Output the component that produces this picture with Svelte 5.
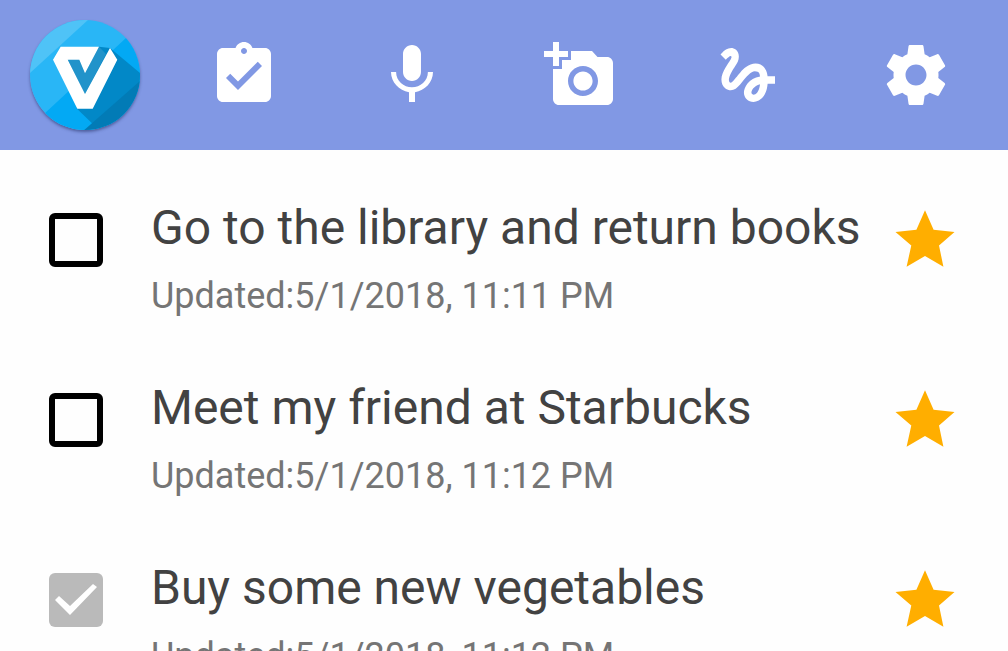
<script>
  const actions = [
    {
      label: 'New checklist',
      path: 'M19 3h-4.18C14.4 1.84 13.3 1 12 1c-1.3 0-2.4.84-2.82 2H5c-1.1 0-2 .9-2 2v14c0 1.1.9 2 2 2h14c1.1 0 2-.9 2-2V5c0-1.1-.9-2-2-2zm-7 0c.55 0 1 .45 1 1s-.45 1-1 1-1-.45-1-1 .45-1 1-1zm-2 14l-4-4 1.41-1.41L10 14.17l6.59-6.59L18 9l-8 8z'
    },
    {
      label: 'Record voice',
      path: 'M12 14c1.66 0 2.99-1.34 2.99-3L15 5c0-1.66-1.34-3-3-3S9 3.34 9 5v6c0 1.66 1.34 3 3 3zm5.3-3c0 3-2.54 5.1-5.3 5.1S6.7 14 6.7 11H5c0 3.41 2.72 6.23 6 6.72V21h2v-3.28c3.28-.48 6-3.3 6-6.72h-1.7z'
    },
    {
      label: 'Add a photo',
      path: 'M3 4V1h2v3h3v2H5v3H3V6H0V4h3zm3 6V7h3V4h7l1.83 2H21c1.1 0 2 .9 2 2v12c0 1.1-.9 2-2 2H5c-1.1 0-2-.9-2-2V10h3zm7 9c2.76 0 5-2.24 5-5s-2.24-5-5-5-5 2.24-5 5 2.24 5 5 5zm-3.2-5c0 1.77 1.43 3.2 3.2 3.2s3.2-1.43 3.2-3.2-1.43-3.2-3.2-3.2-3.2 1.43-3.2 3.2z'
    },
    {
      label: 'Draw',
      path: 'M4.59 6.89c.7-.71 1.4-1.35 1.71-1.22.5.2 0 1.03-.3 1.52-.25.42-2.86 3.89-2.86 6.31 0 1.28.48 2.34 1.34 2.98.75.56 1.74.73 2.64.46 1.07-.31 1.95-1.4 3.06-2.77 1.21-1.49 2.83-3.44 4.08-3.44 1.63 0 1.65 1.01 1.76 1.79-3.78.64-5.38 3.67-5.38 5.37 0 1.7 1.44 3.09 3.21 3.09 1.63 0 4.29-1.33 4.69-6.1H21v-2.5h-2.47c-.15-1.65-1.09-4.2-4.03-4.2-2.25 0-4.18 1.91-4.94 2.84-.58.73-2.06 2.48-2.29 2.72-.25.3-.68.84-1.11.84-.45 0-.72-.83-.36-1.92.35-1.09 1.4-2.86 1.85-3.52.78-1.14 1.3-1.92 1.3-3.28C8.95 3.69 7.31 3 6.44 3 5.12 3 3.97 4 3.72 4.25c-.36.36-.66.66-.88.93l1.75 1.71zm9.29 11.66c-.31 0-.74-.26-.74-.72 0-.6.73-2.2 2.87-2.76-.3 2.69-1.43 3.48-2.13 3.48z'
    },
    {
      label: 'Settings',
      path: 'M19.43 12.98c.04-.32.07-.64.07-.98s-.03-.66-.07-.98l2.11-1.65c.19-.15.24-.42.12-.64l-2-3.46c-.12-.22-.39-.3-.61-.22l-2.49 1c-.52-.4-1.08-.73-1.69-.98l-.38-2.65C14.46 2.18 14.25 2 14 2h-4c-.25 0-.46.18-.49.42l-.38 2.65c-.61.25-1.17.59-1.69.98l-2.49-1c-.23-.09-.49 0-.61.22l-2 3.46c-.13.22-.07.49.12.64l2.11 1.65c-.04.32-.07.65-.07.98s.03.66.07.98l-2.11 1.65c-.19.15-.24.42-.12.64l2 3.46c.12.22.39.3.61.22l2.49-1c.52.4 1.08.73 1.69.98l.38 2.65c.03.24.24.42.49.42h4c.25 0 .46-.18.49-.42l.38-2.65c.61-.25 1.17-.59 1.69-.98l2.49 1c.23.09.49 0 .61-.22l2-3.46c.12-.22.07-.49-.12-.64l-2.11-1.65zM12 15.5c-1.93 0-3.5-1.57-3.5-3.5s1.57-3.5 3.5-3.5 3.5 1.57 3.5 3.5-1.57 3.5-3.5 3.5z'
    }
  ];

  let notes = $state([
    { id: 1, title: 'Go to the library and return books', updated: '5/1/2018, 11:11 PM', done: false },
    { id: 2, title: 'Meet my friend at Starbucks', updated: '5/1/2018, 11:12 PM', done: false },
    { id: 3, title: 'Buy some new vegetables', updated: '5/1/2018, 11:12 PM', done: true }
  ]);
</script>

<div class="page">
  <header>
    <button class="logo" aria-label="Open app">
      <svg viewBox="0 0 110 110" aria-hidden="true">
        <defs>
          <clipPath id="disc"><circle cx="55" cy="55" r="55" /></clipPath>
        </defs>
        <g clip-path="url(#disc)">
          <rect width="110" height="110" fill="#29b6f6" />
          <path d="M0 0H58L0 53Z" fill="#4fc3f7" />
          <path d="M110 5L0 107V110H110Z" fill="#03a9f4" />
          <path d="M80 28L110 53V110H69L47 88.7L37.7 39.7L69 26.7Z" fill="#0288c7" />
          <path d="M37.7 39.7H49.3L55 53.3L69 26.7L76 34L55 74Z" fill="#2193ca" />
          <path d="M110 61L52 112H110Z" fill="#027bb6" />
          <path d="M30.7 26.7H69L55 53.3L49.3 39.7H37.7L55 74L80 28L87.3 39.7L62.7 88.7H47.3L23 39.7Z" fill="#fff" />
        </g>
      </svg>
    </button>
    <nav aria-label="Create and configure">
      {#each actions as action}
        <button class="action" aria-label={action.label}>
          <svg viewBox="0 0 24 24" aria-hidden="true"><path d={action.path} /></svg>
        </button>
      {/each}
    </nav>
  </header>

  <ul>
    {#each notes as note (note.id)}
      <li>
        <input type="checkbox" id="note-{note.id}" bind:checked={note.done} />
        <label for="note-{note.id}">
          <span class="title">{note.title}</span>
          <span class="updated">Updated:{note.updated}</span>
        </label>
        <button class="star" aria-label="Starred" aria-pressed="true">
          <svg viewBox="0 0 60 60" aria-hidden="true">
            <path d="M30 .3L38.6 19.8L59.5 22L44 35.4L48.4 56.7L30 46L11.6 56.7L16.3 35.4L.5 22L21.4 19.8Z" />
          </svg>
        </button>
      </li>
    {/each}
  </ul>
</div>

<style>
  .page {
    display: flex;
    flex-direction: column;
    height: 100vh;
    overflow: hidden;
    background: #fefefe;
    font-family: Roboto, sans-serif;
  }

  button {
    padding: 0;
    border: 0;
    background: none;
    cursor: pointer;
  }

  svg {
    display: block;
  }

  header {
    display: flex;
    flex: none;
    align-items: center;
    height: 150px;
    padding: 0 8px 0 30px;
    box-sizing: border-box;
    background: #8198e4;
  }

  .logo {
    flex: none;
    width: 110px;
    height: 110px;
    margin-right: 20px;
    border-radius: 50%;
    box-shadow: 0 2px 3px rgba(30, 40, 90, 0.5);
  }

  nav {
    display: flex;
    flex: 1;
  }

  .action {
    display: flex;
    flex: 1;
    justify-content: center;
  }

  .action svg {
    width: 72px;
    height: 72px;
    fill: #fff;
  }

  ul {
    flex: 1;
    min-height: 0;
    margin: 0;
    padding: 0;
    overflow-y: auto;
    scrollbar-width: none;
    list-style: none;
  }

  li {
    display: flex;
    align-items: center;
    padding: 0 53px 0 49px;
  }

  input {
    flex: none;
    appearance: none;
    width: 54px;
    height: 54px;
    margin: 0 48px 0 0;
    border: 6px solid #000;
    border-radius: 6px;
    box-sizing: border-box;
  }

  input:checked {
    border: 0;
    background: #bababa;
  }

  input:checked::before {
    content: '';
    display: block;
    height: 54px;
    background: #fff;
    clip-path: polygon(48px 14px, 21px 42px, 6px 27px, 10px 23px, 21px 33px, 44px 11px);
  }

  label {
    display: flex;
    flex: 1;
    flex-direction: column;
    gap: 16px;
    min-width: 0;
    padding: 48px 0 12px;
  }

  .title {
    overflow: hidden;
    color: #424242;
    font-size: 48px;
    line-height: 60px;
    text-overflow: ellipsis;
    white-space: nowrap;
  }

  .updated {
    color: #757575;
    font-size: 36px;
    line-height: 44px;
  }

  .star {
    flex: none;
    width: 60px;
    height: 60px;
  }

  .star svg {
    fill: #ffae00;
  }
</style>
